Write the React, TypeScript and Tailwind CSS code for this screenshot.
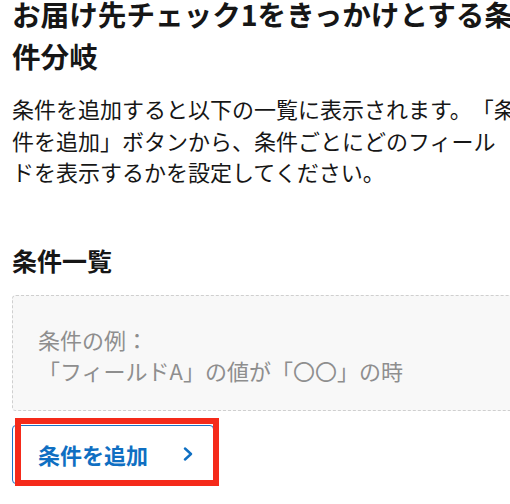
import React from "react";

export default function App() {
  return (
    <div
      className="w-[510px] h-[504px] overflow-hidden bg-white text-[#161616] [text-spacing-trim:space-all]"
      style={{ fontFamily: '"Noto Sans CJK JP", "Noto Sans", sans-serif' }}
    >
      <div className="w-[522px] pl-[12px] pt-0">
        <h1 className="mt-[-7px] text-[28.6px] leading-[42px] font-bold">
          お届け先チェック1をきっかけとする条件分岐
        </h1>
        <p className="mt-[16px] text-[22px] leading-[31.5px]">
          条件を追加すると以下の一覧に表示されます。「条件を追加」ボタンから、条件ごとにどのフィール
          <br />
          ドを表示するかを設定してください。
        </p>
        <h2 className="mt-[54px] text-[25px] leading-[37px] font-bold">条件一覧</h2>
        <div className="mt-[16px] h-[116px] rounded-[4px] border border-dashed border-[#cfcfcf] bg-[#f8f8f8] pl-[25px] pt-[28px] text-[22px] leading-[31px] text-[#8e8e8e]">
          <div>条件の例：</div>
          <div>「フィールドA」の値が「〇〇」の時</div>
        </div>
        <div className="relative mt-[14px] w-[202px]">
          <button className="flex h-[59px] w-[202px] items-center justify-between rounded-[4px] border border-[#1a72c6] bg-white pl-[25px] pr-[20px] text-[22px] font-bold text-[#0f6fc2]">
            <span>条件を追加</span>
            <svg width="10" height="14" viewBox="0 0 10 14" fill="none">
              <polyline
                points="2,1.5 8,7 2,12.5"
                stroke="#0f6fc2"
                strokeWidth="2.4"
                strokeLinecap="round"
                strokeLinejoin="round"
              />
            </svg>
          </button>
          <div className="pointer-events-none absolute left-[3px] top-[-7px] h-[68px] w-[204px] border-[6px] border-[#f52a1a]" />
        </div>
      </div>
    </div>
  );
}
